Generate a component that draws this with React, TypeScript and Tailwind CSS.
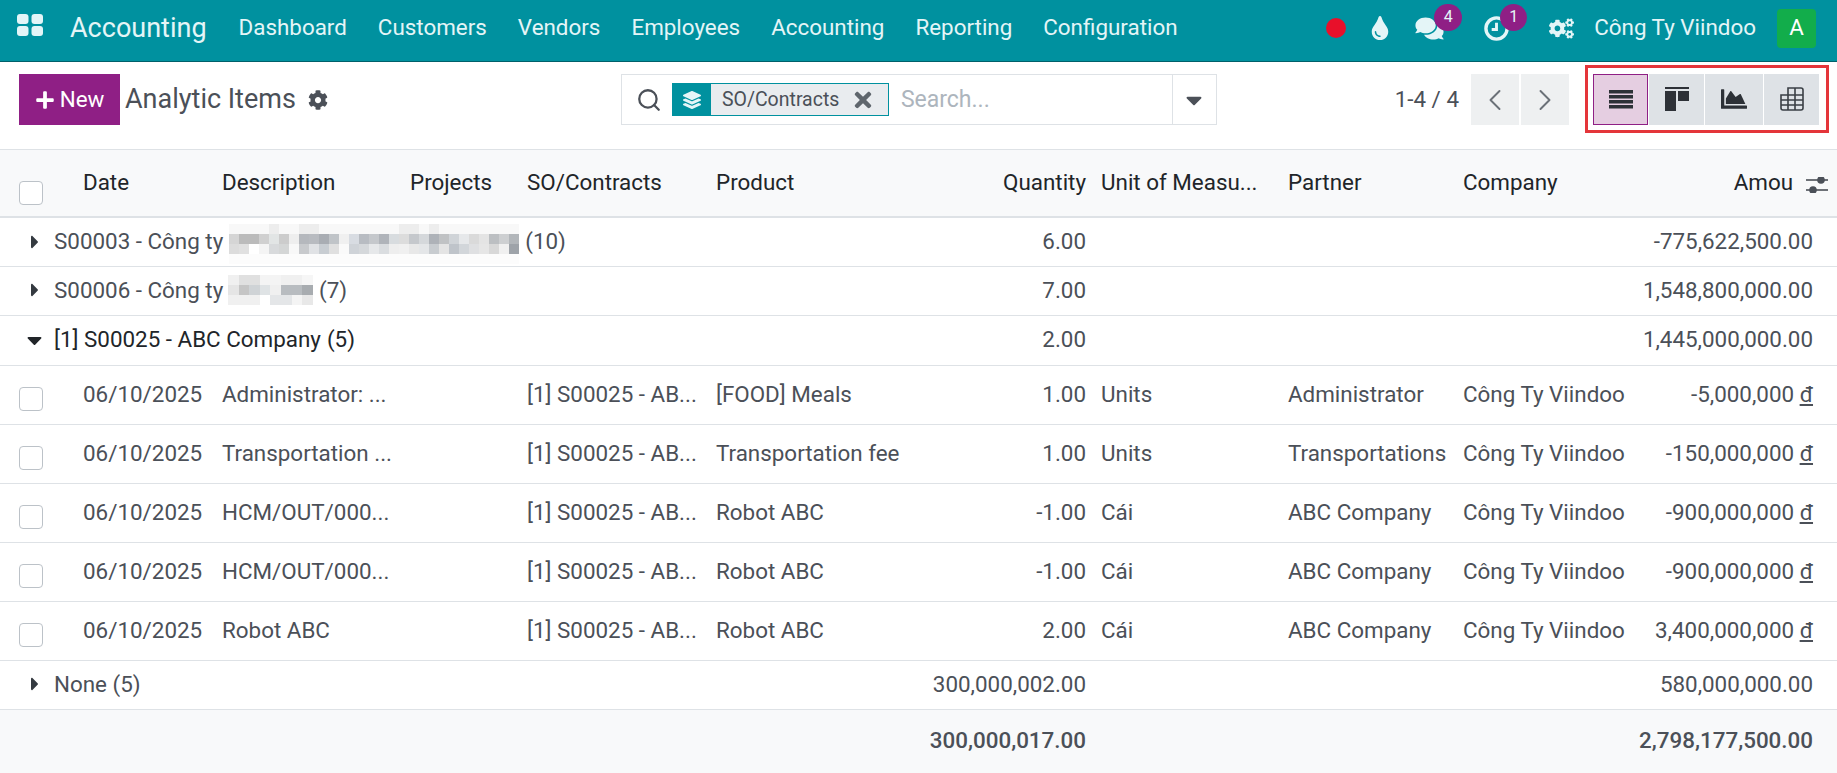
import { ChevronLeft, ChevronRight, Search } from 'lucide-react';
import {
  FaCaretDown,
  FaCaretRight,
  FaChartArea,
  FaCog,
  FaCogs,
  FaComments,
  FaLayerGroup,
  FaPlus,
  FaTimes,
  FaTint,
} from 'react-icons/fa';

const MENU = ['Dashboard', 'Customers', 'Vendors', 'Employees', 'Accounting', 'Reporting', 'Configuration'];

const ROWS = [
  ['Administrator: ...', '[FOOD] Meals', '1.00', 'Units', 'Administrator', '-5,000,000'],
  ['Transportation ...', 'Transportation fee', '1.00', 'Units', 'Transportations', '-150,000,000'],
  ['HCM/OUT/000...', 'Robot ABC', '-1.00', 'Cái', 'ABC Company', '-900,000,000'],
  ['HCM/OUT/000...', 'Robot ABC', '-1.00', 'Cái', 'ABC Company', '-900,000,000'],
  ['Robot ABC', 'Robot ABC', '2.00', 'Cái', 'ABC Company', '3,400,000,000'],
];

function Mosaic({ cols, cell, shades }: { cols: number; cell: number; shades: string[] }) {
  const rows = Math.ceil(shades.length / cols);
  return (
    <svg width={cols * cell} height={rows * 10} className="block" shapeRendering="crispEdges">
      {shades.map((fill, i) => (
        <rect key={i} x={(i % cols) * cell} y={Math.floor(i / cols) * 10} width={cell} height="10" fill={fill} />
      ))}
    </svg>
  );
}

// the censored company names
const L = '#f8f8f8', F = '#fcfcfc', H = '#ededed';
const BLUR_LONG = [
  L, L, L, L, H, L, L, H, H, L, L, L, L, L, L, L, L, H, H, L, H, L, L, L, L, L, L, L, L,
  '#d5d5d5', '#bbbbbb', '#bbbbbb', '#d0d0d0', '#e2e5e5', '#cccccc', '#eeeeee', '#b5b8bd', '#b8bbc0', '#a9adb3', '#c0c4c8', '#f0f0f0', '#d8dce2', '#b8bcc2', '#c5c8cc', '#b0b4ba', '#d8dcdf', '#dcdcdc', '#c5c8cc', '#d5d8db', '#aeb2b8', '#c0c2c4', '#d0d4d8', '#e6e8ea', '#dadada', '#e4e4e4', '#bcbfc2', '#cdcfd1', '#b2b6ba',
  '#dcdcdc', '#e0e0e0', '#ffffff', '#f4f4f4', '#d8dadc', '#d4d6d6', '#f8f8f8', '#c8cacd', '#e0e2e5', '#c8cdd2', '#e0e0e0', '#fafafa', '#cfd3d8', '#d5d8db', '#e6e8ea', '#dadde0', '#eeeeee', '#f0f0f0', '#e8e8e8', '#e4e6e8', '#c8ccd0', '#e4e4e4', '#bfc4ca', '#d2d6da', '#dfe0e2', '#e6e6e6', '#d8d8d8', '#f0f0f0', '#9ea3a9',
  F, F, F, F, F, F, F, F, F, F, F, F, F, F, F, F, F, F, F, F, F, F, F, F, F, F, F, F, F,
];
const BLUR_SHORT = [
  '#f0f0f0', '#e0e0e0', '#e0e0e0', '#f4f4f4', '#f4f4f4', '#f0f0f0', '#f0f0f0', '#f6f6f6',
  '#e5e5e5', '#c5c5c5', '#cfd3d6', '#dfe3e5', '#f0f0f0', '#b8bcc0', '#b8bcc0', '#a8acb0',
  '#f0f0f0', '#f0f0f0', '#f0f0f0', '#ffffff', '#e4e6e8', '#e4e6e8', '#f4f4f4', '#e8e8e8',
];

function Caret({ open }: { open?: boolean }) {
  return (
    <span className="w-[17px] flex items-center justify-center">
      {open
        ? <FaCaretDown className="w-[15px] h-[24px] text-[#212529]" />
        : <FaCaretRight className="w-[8px] h-[22px] text-[#343a40]" />}
    </span>
  );
}

function GroupRow({ open, label, blur, count, qty, amount }: {
  open?: boolean; label: string; blur?: 'long' | 'short'; count: string; qty: string; amount: string;
}) {
  return (
    <tr className={`border-b border-[#dee2e6] ${open ? 'h-[50px] text-[#212529]' : 'h-[49px] text-[#4b5058]'}`}>
      <td colSpan={6} className="pl-[26px]">
        <div className="flex items-center">
          <Caret open={open} />
          <span className="ml-[11px] whitespace-nowrap">{label}</span>
          {blur === 'long' && <span className="ml-[6px] mr-[6px] mt-[4px]"><Mosaic cols={29} cell={10} shades={BLUR_LONG} /></span>}
          {blur === 'short' && <span className="ml-[5px] mr-[6px]"><Mosaic cols={8} cell={10.6} shades={BLUR_SHORT} /></span>}
          {!blur && <span className="w-[6px]" />}
          <span className="whitespace-nowrap">{count}</span>
        </div>
      </td>
      <td className="text-right pr-[7px] text-[#4b5058]">{qty}</td>
      <td colSpan={3} />
      <td colSpan={2} className="text-right pr-[24px] text-[#4b5058]">{amount}</td>
    </tr>
  );
}

export default function App() {
  return (
    <div className="w-[1837px] h-[773px] overflow-hidden bg-white font-['Roboto',sans-serif] text-[22.4px] text-[#4b5058]">
      {/* navbar */}
      <nav className="h-[62px] pb-[5px] bg-[#00919f] border-b border-[#00606a] flex items-center text-[22.4px] text-[#e4f5f7]">
        <svg width="26" height="22" viewBox="0 0 26 22" className="ml-[17px] mb-[6px]" fill="#e4f5f7">
          <rect x="0" y="0" width="11.5" height="10" rx="3" />
          <rect x="14.5" y="0" width="11.5" height="10" rx="3" />
          <rect x="0" y="12" width="11.5" height="10" rx="3" />
          <rect x="14.5" y="12" width="11.5" height="10" rx="3" />
        </svg>
        <span className="ml-[27px] text-[27px]">Accounting</span>
        <div className="ml-[32px] flex gap-[31px]">
          {MENU.map((m) => <span key={m}>{m}</span>)}
        </div>
        <div className="ml-auto flex items-center">
          <span className="w-[20px] h-[20px] rounded-full bg-[#e8102a]" />
          <FaTint className="ml-[25px] w-[18px] h-[24px]" />
          <span className="relative ml-[26px]">
            <FaComments className="w-[29px] h-[25px]" />
            <span className="absolute -top-[12px] left-[19px] w-[28px] h-[27px] rounded-full bg-[#8f1f85] text-[16px] flex items-center justify-center">4</span>
          </span>
          <span className="relative ml-[40px]">
            <svg width="25" height="25" viewBox="0 0 26 26" fill="none" stroke="#e4f5f7" strokeWidth="3.5" className="block">
              <circle cx="13" cy="13" r="11" />
              <path d="M13 7v7H8" strokeWidth="3" />
            </svg>
            <span className="absolute -top-[12px] left-[16px] w-[27px] h-[27px] rounded-full bg-[#8f1f85] text-[16px] flex items-center justify-center">1</span>
          </span>
          <FaCogs className="ml-[40px] w-[25px] h-[23px]" />
          <span className="ml-[20px]">Công Ty Viindoo</span>
          <span className="ml-[21px] mr-[21px] w-[39px] h-[39px] rounded-[4px] bg-[#12ad4b] flex items-center justify-center text-white">A</span>
        </div>
      </nav>

      {/* control panel */}
      <div className="h-[88px] border-b border-[#dee2e6] flex items-start pl-[19px]">
        <button className="mt-[12px] w-[101px] h-[51px] bg-[#8f1f85] text-white flex items-center justify-center gap-[5px]">
          <FaPlus className="w-[20px] h-[20px]" />
          New
        </button>
        <span className="ml-[5px] mt-[12px] h-[51px] flex items-center text-[27px] text-[#4b5058]">Analytic Items</span>
        <FaCog className="ml-[12px] mt-[28px] w-[20px] h-[20px] text-[#4b5058]" />

        <div className="ml-[293px] mt-[12px] w-[596px] h-[51px] border border-[#dee2e6] flex items-center">
          <Search className="ml-[14px] w-[26px] h-[26px] text-[#4b5058]" strokeWidth={2.1} />
          <div className="ml-[10px] h-[33px] w-[217px] border border-[#00919f] flex items-center bg-[#e9ecef]">
            <span className="w-[38px] h-full bg-[#00919f] flex items-center justify-center text-[#e4f5f7]">
              <FaLayerGroup className="w-[18px] h-[18px]" />
            </span>
            <span className="ml-[11px] text-[19.5px]">SO/Contracts</span>
            <FaTimes className="ml-[12px] w-[24px] h-[24px] text-[#5f666d]" />
          </div>
          <span className="ml-[12px] mt-[1px] text-[23px] text-[#adb5bd]">Search...</span>
          <span className="ml-auto w-[44px] h-full border-l border-[#dee2e6] flex items-center justify-center">
            <FaCaretDown className="w-[16px] h-[26px] text-[#4b5058]" />
          </span>
        </div>

        <span className="ml-auto mt-[12px] h-[51px] flex items-center">1-4 / 4</span>
        <div className="ml-[12px] mt-[12px] flex gap-[2px]">
          <span className="w-[48px] h-[51px] bg-[#eef0f1] flex items-center justify-center"><ChevronLeft className="w-[36px] h-[36px] text-[#6b7178]" strokeWidth={1.3} /></span>
          <span className="w-[48px] h-[51px] bg-[#eef0f1] flex items-center justify-center"><ChevronRight className="w-[36px] h-[36px] text-[#6b7178]" strokeWidth={1.3} /></span>
        </div>

        {/* views, red box is part of the picture */}
        <div className="ml-[16px] mr-[8px] mt-[3px] w-[244px] h-[68px] border-[3px] border-[#e4353a] flex items-center pl-[5px]">
          <span className="w-[55px] h-[51px] bg-[#e5cee1] border border-[#8f1f85] flex items-center justify-center">
            <svg width="24" height="20" viewBox="0 0 24 20" fill="#2d3137"><rect y="1" width="24" height="3.5" /><rect y="6" width="24" height="3.5" /><rect y="11" width="24" height="3.5" /><rect y="16" width="24" height="3.5" /></svg>
          </span>
          <span className="ml-px w-[55px] h-[51px] bg-[#dee2e6] flex items-center justify-center">
            <svg width="24" height="24" viewBox="0 0 24 24" fill="#2d3137"><rect y="0" width="24" height="2" /><rect y="4" width="11" height="20" /><rect x="13" y="4" width="11" height="10" /></svg>
          </span>
          <span className="ml-px w-[58px] h-[51px] bg-[#dee2e6] flex items-center justify-center">
            <FaChartArea className="w-[30px] h-[26px] text-[#2d3137]" />
          </span>
          <span className="ml-px w-[55px] h-[51px] bg-[#dee2e6] flex items-center justify-center">
            <svg width="24" height="24" viewBox="0 0 24 24" fill="none" stroke="#3a3f45" strokeWidth="1.6"><path d="M8 8V1h13a2 2 0 0 1 2 2v18a2 2 0 0 1-2 2H3a2 2 0 0 1-2-2V8zM1 13h22M1 18h22M8 8v15M15 1v22M8 8h15" /></svg>
          </span>
        </div>
      </div>

      {/* list */}
      <table className="w-[1837px] table-fixed border-collapse">
        <colgroup>
          <col className="w-[75px]" />
          <col className="w-[139px]" />
          <col className="w-[188px]" />
          <col className="w-[117px]" />
          <col className="w-[189px]" />
          <col className="w-[197px]" />
          <col className="w-[188px]" />
          <col className="w-[187px]" />
          <col className="w-[175px]" />
          <col className="w-[179px]" />
          <col className="w-[190px]" />
          <col className="w-[13px]" />
        </colgroup>
        <thead>
          <tr className="h-[67px] bg-[#f8f9fa] border-b-2 border-[#dee2e6] text-[#212529]">
            <th className="pl-[19px] text-left font-normal"><span className="mt-[19px] block w-[24px] h-[24px] rounded-[4px] border border-[#bcc2c8] bg-white" /></th>
            <th className="pl-[8px] text-left font-normal">Date</th>
            <th className="pl-[8px] text-left font-normal">Description</th>
            <th className="pl-[8px] text-left font-normal">Projects</th>
            <th className="pl-[8px] text-left font-normal">SO/Contracts</th>
            <th className="pl-[8px] text-left font-normal">Product</th>
            <th className="pr-[7px] text-right font-normal">Quantity</th>
            <th className="pl-[8px] text-left font-normal whitespace-nowrap overflow-hidden">Unit of Measu...</th>
            <th className="pl-[8px] text-left font-normal">Partner</th>
            <th className="pl-[8px] text-left font-normal">Company</th>
            <th colSpan={2} className="font-normal">
              <div className="flex items-center justify-end pr-[9px] gap-[13px]">
                Amou
                <svg width="22" height="16" viewBox="0 0 22 16" fill="#4b5058" className="mt-[4px]">
                  <rect y="2.2" width="22" height="1.6" /><circle cx="15" cy="3" r="3.8" />
                  <rect y="12.2" width="22" height="1.6" /><circle cx="7" cy="13" r="3.8" />
                </svg>
              </div>
            </th>
          </tr>
        </thead>
        <tbody>
          <GroupRow label="S00003 - Công ty" blur="long" count="(10)" qty="6.00" amount="-775,622,500.00" />
          <GroupRow label="S00006 - Công ty" blur="short" count="(7)" qty="7.00" amount="1,548,800,000.00" />
          <GroupRow open label="[1] S00025 - ABC Company" count="(5)" qty="2.00" amount="1,445,000,000.00" />
          {ROWS.map((r, i) => (
            <tr key={i} className="h-[59px] border-b border-[#dee2e6]">
              <td className="pl-[19px]"><span className="mt-[8px] block w-[24px] h-[24px] rounded-[4px] border border-[#bcc2c8]" /></td>
              <td className="pl-[8px] whitespace-nowrap">06/10/2025</td>
              <td className="pl-[8px] whitespace-nowrap">{r[0]}</td>
              <td />
              <td className="pl-[8px] whitespace-nowrap">[1] S00025 - AB...</td>
              <td className="pl-[8px] whitespace-nowrap">{r[1]}</td>
              <td className="pr-[7px] text-right">{r[2]}</td>
              <td className="pl-[8px]">{r[3]}</td>
              <td className="pl-[8px] whitespace-nowrap">{r[4]}</td>
              <td className="pl-[8px] whitespace-nowrap">Công Ty Viindoo</td>
              <td colSpan={2} className="pr-[24px] text-right whitespace-nowrap">{r[5]} <span className="underline">đ</span></td>
            </tr>
          ))}
          <tr className="h-[49px] border-b border-[#dee2e6]">
            <td colSpan={5} className="pl-[26px]">
              <div className="flex items-center"><Caret /><span className="ml-[11px]">None (5)</span></div>
            </td>
            <td className="text-right pr-[7px]" colSpan={2}>300,000,002.00</td>
            <td colSpan={3} />
            <td colSpan={2} className="text-right pr-[24px]">580,000,000.00</td>
          </tr>
          <tr className="h-[64px] bg-[#f8f9fa] font-medium">
            <td colSpan={7} className="text-right pr-[7px]">300,000,017.00</td>
            <td colSpan={3} />
            <td colSpan={2} className="text-right pr-[24px]">2,798,177,500.00</td>
          </tr>
        </tbody>
      </table>
    </div>
  );
}
